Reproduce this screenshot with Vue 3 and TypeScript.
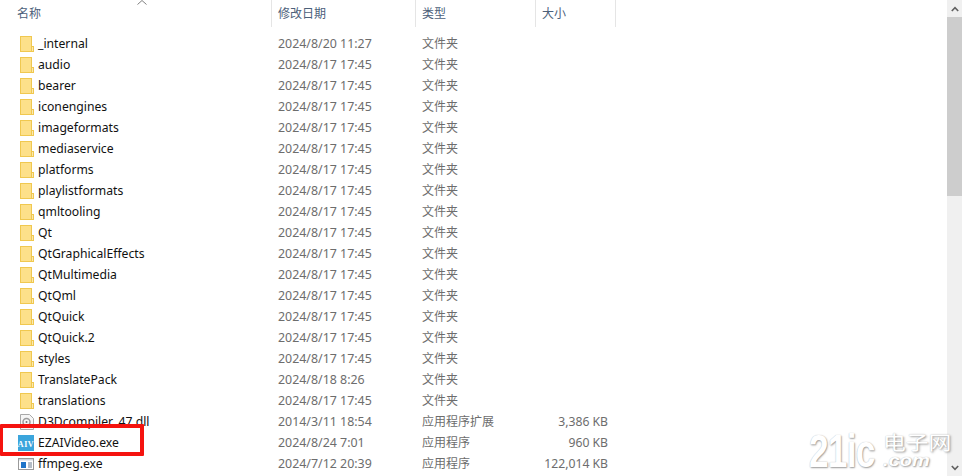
<script setup lang="ts">
interface Row { name: string; date: string; type: string; size?: string; icon: 'folder' | 'dll' | 'aiv' | 'exe' }
const folders: [string, string][] = [
  ['_internal', '2024/8/20 11:27'], ['audio', '2024/8/17 17:45'], ['bearer', '2024/8/17 17:45'],
  ['iconengines', '2024/8/17 17:45'], ['imageformats', '2024/8/17 17:45'], ['mediaservice', '2024/8/17 17:45'],
  ['platforms', '2024/8/17 17:45'], ['playlistformats', '2024/8/17 17:45'], ['qmltooling', '2024/8/17 17:45'],
  ['Qt', '2024/8/17 17:45'], ['QtGraphicalEffects', '2024/8/17 17:45'], ['QtMultimedia', '2024/8/17 17:45'],
  ['QtQml', '2024/8/17 17:45'], ['QtQuick', '2024/8/17 17:45'], ['QtQuick.2', '2024/8/17 17:45'],
  ['styles', '2024/8/17 17:45'], ['TranslatePack', '2024/8/18 8:26'], ['translations', '2024/8/17 17:45'],
]
const rows: Row[] = [
  ...folders.map(([name, date]): Row => ({ name, date, type: '文件夹', icon: 'folder' })),
  { name: 'D3Dcompiler_47.dll', date: '2014/3/11 18:54', type: '应用程序扩展', size: '3,386 KB', icon: 'dll' },
  { name: 'EZAIVideo.exe', date: '2024/8/24 7:01', type: '应用程序', size: '960 KB', icon: 'aiv' },
  { name: 'ffmpeg.exe', date: '2024/7/12 20:39', type: '应用程序', size: '122,014 KB', icon: 'exe' },
]
</script>

<template>
  <div class="window">
    <div class="list">
      <div class="header">
        <div class="hcell name-col">名称
          <svg class="sort" width="10" height="5" viewBox="0 0 10 5"><path d="M0.5 4.5 L5 0.5 L9.5 4.5" fill="none" stroke="#808080" stroke-width="1" /></svg>
        </div>
        <div class="hcell date-col">修改日期</div>
        <div class="hcell type-col">类型</div>
        <div class="hcell size-col">大小</div>
      </div>
      <div class="rows">
        <div v-for="r in rows" :key="r.name" class="row">
          <div class="cell name-col name">
            <svg v-if="r.icon === 'folder'" class="icon" width="14" height="16" viewBox="0 0 14 16">
              <rect x="0.5" y="0.5" width="11" height="15" fill="#fde08a" stroke="#f0c850" />
              <rect x="11.5" y="10.5" width="2" height="5" fill="#fbe9b0" stroke="#f0c850" />
            </svg>
            <svg v-else-if="r.icon === 'dll'" class="icon" width="14" height="16" viewBox="0 0 14 16">
              <path d="M0.5 0.5 H9.5 L13.5 4.5 V15.5 H0.5 Z" fill="#f6f6f6" stroke="#a9a9a9" />
              <circle cx="6.5" cy="8" r="3.5" fill="none" stroke="#9c9c9c" stroke-width="1.5" />
              <circle cx="6.5" cy="8" r="1" fill="#777" />
            </svg>
            <svg v-else-if="r.icon === 'aiv'" class="icon wide" width="16" height="16" viewBox="0 0 16 16">
              <rect width="16" height="16" fill="#3ba5dc" />
              <text x="8" y="11.5" text-anchor="middle" class="aiv-text">AIV</text>
            </svg>
            <svg v-else class="icon wide" width="16" height="12" viewBox="0 0 16 12">
              <rect x="0.5" y="0.5" width="15" height="11" fill="#fff" stroke="#9a9a9a" />
              <rect x="1" y="1" width="14" height="1.5" fill="#cfd6df" />
              <rect x="3" y="4" width="5" height="6" fill="#1f74c8" />
              <path d="M10 5 H14 M10 7 H14 M10 9 H14" stroke="#6a7c90" />
            </svg>
            <span class="label">{{ r.name }}</span>
          </div>
          <div class="cell date-col meta date">{{ r.date }}</div>
          <div class="cell type-col meta">{{ r.type }}</div>
          <div class="cell size-col meta size">{{ r.size }}</div>
        </div>
      </div>
    </div>
    <div class="scrollbar">
      <div class="arrow">
        <svg width="8" height="6" viewBox="0 0 8 6"><path d="M0.8 5 L4 1.6 L7.2 5" fill="none" stroke="#606060" stroke-width="1.6" /></svg>
      </div>
      <div class="thumb"></div>
      <div class="track"></div>
      <div class="arrow">
        <svg width="8" height="6" viewBox="0 0 8 6"><path d="M0.8 1 L4 4.4 L7.2 1" fill="none" stroke="#606060" stroke-width="1.6" /></svg>
      </div>
    </div>
    <div class="highlight"></div>
    <div class="watermark">
      <span class="wm-big">21ic</span>
      <span class="wm-side"><span class="wm-cn">电子网</span><span class="wm-com">.com</span></span>
    </div>
  </div>
</template>

<style>
html, body { margin: 0; background: #fff; overflow: hidden; }
</style>

<style scoped>
.window {
  position: relative;
  display: flex;
  width: 963px;
  height: 476px;
  overflow: hidden;
  background: #fff;
  font-family: "Noto Sans", "Noto Sans CJK SC", sans-serif;
  font-size: 12px;
}
.list { flex: 1; min-width: 0; }
.header { display: flex; height: 27px; }
.hcell {
  position: relative;
  box-sizing: border-box;
  height: 27px;
  line-height: 27px;
  color: #4c607a;
  border-right: 1px solid #e5e5e5;
}
.name-col { width: 272px; padding-left: 17px; box-sizing: border-box; flex: none; }
.date-col { width: 144px; padding-left: 6px; box-sizing: border-box; flex: none; }
.type-col { width: 120px; padding-left: 6px; box-sizing: border-box; flex: none; }
.size-col { width: 80px; padding-left: 6px; box-sizing: border-box; flex: none; }
.sort { position: absolute; left: 137px; top: 0; }
.rows { padding-top: 6px; }
.row { display: flex; height: 21px; align-items: center; }
.cell { line-height: 21px; white-space: nowrap; }
.name { display: flex; align-items: center; padding-left: 20px; color: #111; font-size: 12.2px; }
.icon { flex: none; }
.wide { margin-left: -2px; }
.label { margin-left: 4px; }
.aiv-text { font-family: "Liberation Serif", serif; font-weight: 700; font-size: 8px; letter-spacing: 0.6px; fill: #fff; }
.meta { color: #6d6d6d; }
.date { font-size: 12.4px; }
.size { text-align: right; padding-right: 8px; padding-left: 0; font-size: 12.2px; }
.scrollbar {
  flex: none;
  width: 15px;
  margin-right: 1px;
  display: flex;
  flex-direction: column;
  background: #f0f0f0;
}
.arrow { height: 17px; display: flex; align-items: center; justify-content: center; flex: none; }
.thumb { height: 179px; background: #cdcdcd; flex: none; }
.track { flex: 1; }
.highlight {
  position: absolute;
  left: 0;
  top: 424px;
  width: 144px;
  height: 32px;
  box-sizing: border-box;
  border: 4px solid #f5130f;
  border-left-width: 3px;
  border-radius: 1px;
}
.watermark {
  position: absolute;
  left: 809px;
  top: 429px;
  display: flex;
  align-items: flex-start;
  gap: 5px;
  color: #fff;
  font-family: "Liberation Sans", sans-serif;
  text-shadow: 1px 1px 2px #9a9a9a, 0 0 1px #bbb;
  pointer-events: none;
}
.wm-big { font-size: 47px; font-weight: 700; line-height: 44px; letter-spacing: -1px; transform: scaleX(0.75); transform-origin: left; width: 69px; }
.wm-side { display: flex; flex-direction: column; margin-top: 3px; }
.wm-cn { font-family: "Noto Sans CJK SC", sans-serif; font-size: 19px; line-height: 20px; height: 20px; transform: scaleX(1.2); transform-origin: left; }
.wm-com { font-size: 20px; font-weight: 700; font-style: italic; line-height: 17px; height: 17px; transform: scaleY(0.8); }
</style>
